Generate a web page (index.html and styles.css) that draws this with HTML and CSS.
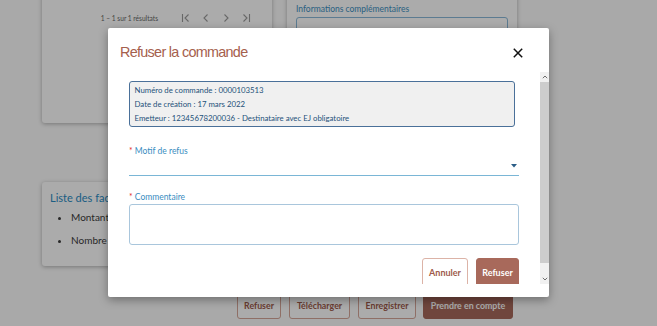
FILE: index.html
```html
<!DOCTYPE html>
<html lang="fr">
<head>
<meta charset="utf-8">
<title>Refuser la commande</title>
<link rel="stylesheet" href="styles.css">
</head>
<body>
<div class="page">
  <div class="columns">
    <div class="col">
      <section class="card card-list">
        <div class="pager">
          <span class="pager-text">1 – 1 sur 1 résultats</span>
          <span class="pager-icons">
            <svg viewBox="0 0 12 12"><path d="M2.5 2v8M8.5 2.5L5 6l3.5 3.5"/></svg>
            <svg viewBox="0 0 12 12"><path d="M7.5 2.5L4 6l3.5 3.5"/></svg>
            <svg viewBox="0 0 12 12"><path d="M4.5 2.5L8 6l-3.5 3.5"/></svg>
            <svg viewBox="0 0 12 12"><path d="M3.5 2.5L7 6l-3.5 3.5M9.5 2v8"/></svg>
          </span>
        </div>
      </section>
      <section class="card card-invoices">
        <h3 class="card-title">Liste des fac</h3>
        <ul class="bullets">
          <li>Montant</li>
          <li>Nombre</li>
        </ul>
      </section>
    </div>
    <section class="card card-info">
      <span class="info-label">Informations complémentaires</span>
      <div class="fake-input"></div>
    </section>
  </div>
  <div class="actions">
    <button class="btn w-refuser">Refuser</button>
    <button class="btn w-telecharger">Télécharger</button>
    <button class="btn w-enregistrer">Enregistrer</button>
    <button class="btn btn-primary w-prendre">Prendre en compte</button>
  </div>
</div>

<div class="overlay"></div>

<div class="modal">
  <div class="modal-header">
    <h2 class="modal-title">Refuser la commande</h2>
    <svg class="close" viewBox="0 0 10 10"><path d="M0.8 0.8L9.2 9.2M9.2 0.8L0.8 9.2"/></svg>
  </div>
  <div class="modal-body">
    <div class="scroll">
      <div class="summary">
        <div>Numéro de commande : 0000103513</div>
        <div>Date de création : 17 mars 2022</div>
        <div>Emetteur : 12345678200036 - Destinataire avec EJ obligatoire</div>
      </div>
      <div class="field-label first"><span class="req">*</span> Motif de refus</div>
      <div class="select">
        <svg class="caret" viewBox="0 0 6 4"><path d="M0 0h6L3 3.6z"/></svg>
      </div>
      <div class="field-label second"><span class="req">*</span> Commentaire</div>
      <div class="textarea"></div>
      <div class="modal-actions">
        <button class="mbtn mbtn-outline">Annuler</button>
        <button class="mbtn mbtn-fill">Refuser</button>
      </div>
    </div>
    <div class="scrollbar">
      <div class="sb-btn"><svg viewBox="0 0 6 4"><path d="M0.8 3.2L3 1l2.2 2.2"/></svg></div>
      <div class="sb-thumb"></div>
      <div class="sb-track"></div>
      <div class="sb-btn"><svg viewBox="0 0 6 4"><path d="M0.8 0.8L3 3l2.2-2.2"/></svg></div>
    </div>
  </div>
</div>
</body>
</html>
```

FILE: styles.css
```css
body {
  margin: 0;
  width: 657px;
  height: 326px;
  overflow: hidden;
  position: relative;
  background: #fcfcfc;
  font-family: Lato, "Open Sans", sans-serif;
}

.page {
  margin-top: -40px;
  padding-left: 42px;
  width: 475px;
}

.columns {
  display: grid;
  grid-template-columns: 230px 230px;
  column-gap: 15px;
  align-items: start;
}

.col {
  display: flex;
  flex-direction: column;
  gap: 59px;
}

.card {
  background: #fff;
  border-radius: 3px;
  box-shadow: 0 1px 4px rgba(0, 0, 0, 0.3);
  box-sizing: border-box;
}

.card-list {
  height: 163px;
  padding: 52px 20px 0 0;
}

.pager {
  display: flex;
  justify-content: flex-end;
  align-items: center;
  height: 12px;
}

.pager-text {
  font-size: 6.6px;
  line-height: 12px;
  color: #666;
  margin-right: 22px;
}

.pager-icons {
  display: flex;
  gap: 8px;
}

.pager-icons svg {
  width: 12px;
  height: 12px;
  fill: none;
  stroke: #9a9a9a;
  stroke-width: 1.1;
}

.card-invoices {
  height: 84px;
  padding: 9px 8px 0;
}

.card-title {
  margin: 0;
  font-size: 11px;
  line-height: 14px;
  font-weight: 400;
  color: #2a8cc4;
}

.bullets {
  margin: 5px 0 0;
  padding-left: 21px;
  font-size: 10px;
  line-height: 14px;
  color: #3c3c3c;
}

.bullets li + li {
  margin-top: 9px;
}

.card-info {
  height: 290px;
  padding: 43px 9px 0;
}

.info-label {
  display: block;
  font-size: 8.5px;
  line-height: 12px;
  color: #3d90c2;
}

.fake-input {
  margin-top: 2px;
  height: 30px;
  border: 1px solid #8ab8d8;
  border-radius: 3px;
}

.actions {
  display: flex;
  justify-content: flex-end;
  gap: 8px;
  margin-top: 27px;
  padding-right: 4px;
}

.btn {
  height: 26px;
  box-sizing: border-box;
  padding: 0;
  border: 1px solid #d6a698;
  border-radius: 3px;
  background: #fff;
  color: #9e5b4b;
  font: 700 8.8px/24px Lato, sans-serif;
  text-align: center;
}

.w-refuser { width: 44px; }
.w-telecharger { width: 61px; }
.w-enregistrer { width: 58px; margin-right: -1px; }
.w-prendre { width: 90px; }

.btn-primary {
  background: #a8695b;
  border-color: #a8695b;
  color: #fff;
}

.overlay {
  position: absolute;
  inset: 0;
  background: rgba(0, 0, 0, 0.33);
}

.modal {
  position: absolute;
  left: 108px;
  top: 28px;
  width: 441px;
  height: 269px;
  background: #fff;
  border-radius: 2px;
  box-shadow: 0 3px 10px rgba(0, 0, 0, 0.35);
  display: flex;
  flex-direction: column;
}

.modal-header {
  height: 44px;
  box-sizing: border-box;
  padding: 16px 26px 0 12px;
  display: flex;
  justify-content: space-between;
  align-items: flex-start;
}

.modal-title {
  margin: 0;
  font: 400 14.4px/16px "Liberation Sans", Arial, sans-serif;
  letter-spacing: -0.7px;
  color: #a5604d;
}

.close {
  width: 10px;
  height: 10px;
  margin-top: 4px;
  fill: none;
  stroke: #111;
  stroke-width: 1.5;
}

.modal-body {
  display: flex;
  height: 212px;
}

.scroll {
  flex: 1;
  overflow: hidden;
  padding: 9px 21px 0;
}

.summary {
  width: 386px;
  box-sizing: border-box;
  border: 1.5px solid #4a7099;
  border-radius: 3px;
  background: #f0f0f0;
  padding: 1px 4px 1px 4.5px;
  font-size: 7.8px;
  line-height: 14px;
  color: #24507a;
}

.field-label {
  font-size: 8.5px;
  line-height: 12px;
  color: #3a8dbf;
}

.field-label.first {
  margin-top: 18px;
}

.field-label.second {
  margin-top: 15px;
}

.req {
  color: #e2312d;
}

.select {
  height: 19px;
  box-sizing: border-box;
  border-bottom: 1px solid #7ab6d6;
  display: flex;
  justify-content: flex-end;
  align-items: flex-start;
  padding: 7px 2px 0 0;
}

.caret {
  width: 6px;
  height: 4px;
  fill: #2b5d87;
}

.textarea {
  margin-top: 1px;
  height: 41px;
  box-sizing: border-box;
  border: 1px solid #a9c6dc;
  border-radius: 3px;
}

.modal-actions {
  display: flex;
  justify-content: flex-end;
  gap: 8px;
  margin-top: 13px;
}

.mbtn {
  height: 30px;
  box-sizing: border-box;
  padding: 0;
  border-radius: 3px;
  font: 700 9px/28px Lato, sans-serif;
  text-align: center;
}

.mbtn-outline {
  width: 46px;
  background: #fff;
  border: 1px solid #dcb3a7;
  color: #9e5b4b;
}

.mbtn-fill {
  width: 43px;
  background: #a8695b;
  border: 1px solid #a8695b;
  color: #fff;
}

.scrollbar {
  width: 9px;
  display: flex;
  flex-direction: column;
  background: #f1f1f1;
}

.sb-btn {
  height: 10px;
  display: flex;
  align-items: center;
  justify-content: center;
}

.sb-btn svg {
  width: 6px;
  height: 4px;
  fill: none;
  stroke: #6f6f6f;
  stroke-width: 1;
}

.sb-thumb {
  height: 181px;
  background: #cdcdcd;
}

.sb-track {
  flex: 1;
}
```
